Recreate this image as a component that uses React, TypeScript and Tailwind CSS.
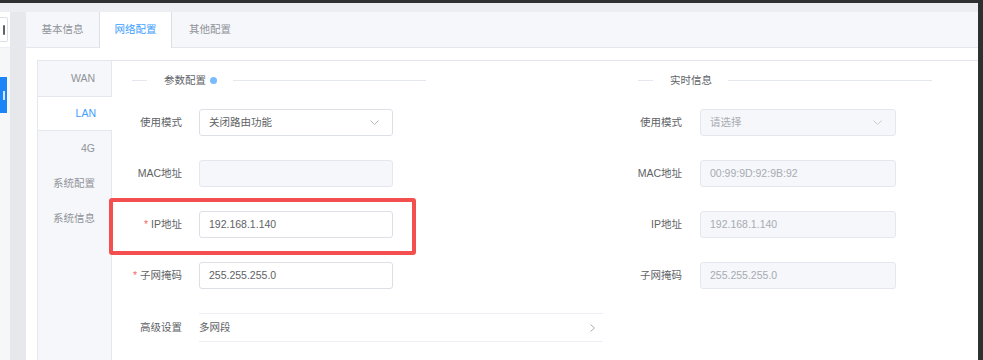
import { ReactNode } from 'react'

const font = 'font-["Liberation_Sans","Noto_Sans_CJK_SC",sans-serif]'

function ChevronDown({ color }: { color: string }) {
  return (
    <svg width="9" height="5" viewBox="0 0 9 5" fill="none" stroke={color} strokeWidth="1">
      <polyline points="0.5,0.5 4.5,4.5 8.5,0.5" />
    </svg>
  )
}

function Divider({ title, dot }: { title: string; dot?: boolean }) {
  return (
    <div className="flex items-center w-[294px] h-[12px]">
      <div className="w-[15px] h-px bg-[#e4e7ed]" />
      <span className="ml-[17px] leading-none text-[#606266]">{title}</span>
      {dot && <span className="ml-[4px] w-[7px] h-[7px] rounded-full bg-[#79bbff]" />}
      <div className="ml-[16px] flex-1 h-px bg-[#e4e7ed]" />
    </div>
  )
}

function Row({ label, required, w, gap, children }: { label: string; required?: boolean; w: string; gap: string; children: ReactNode }) {
  return (
    <div className="flex items-center h-[27px]">
      <div className={`${w} flex justify-end whitespace-nowrap text-[#606266] shrink-0`}>
        {required && <span className="text-[#f56c6c] mr-[3px]">*</span>}
        <span>{label}</span>
      </div>
      <div className={gap}>{children}</div>
    </div>
  )
}

function Input({ value, disabled, select, w }: { value: string; disabled?: boolean; select?: boolean; w: string }) {
  return (
    <div
      className={`${w} h-[27px] rounded-[3px] border flex items-center justify-between pl-[9px] pr-[13px] ${
        disabled ? 'bg-[#f5f7fa] border-[#e4e7ed] text-[#a8abb2]' : 'bg-white border-[#dcdfe6] text-[#606266]'
      }`}
    >
      <span className="leading-none">{value}</span>
      {select && <ChevronDown color={disabled ? '#c8cbd1' : '#b4b7bd'} />}
    </div>
  )
}

export default function App() {
  const tabs = ['基本信息', '网络配置', '其他配置']
  const side = ['WAN', 'LAN', '4G', '系统配置', '系统信息']

  return (
    <div className={`relative w-[983px] h-[360px] overflow-hidden bg-[#2f3130] text-[10.5px] ${font}`}>
      <div className="h-[3px]" />
      <div className="flex w-[978px] h-[357px] bg-[#eceef1] pt-[9px]">
        {/* left sidebar sliver */}
        <div className="w-[11px] h-full flex flex-col bg-[#f6f7f9] border-r border-[#e4e7ed] rounded-tr-[3px]">
          <div className="h-[36px] bg-white border-b border-[#ebeef5] pt-[5px]">
            <div className="w-[8px] h-[25px] border border-l-0 border-[#dcdfe6] rounded-r-[2px] flex items-center justify-end pr-[2px]">
              <div className="w-[2px] h-[10px] bg-[#606266] rounded-[1px]" />
            </div>
          </div>
          <div className="mt-[29px] w-[7px] h-[36px] bg-[#1c84f6] flex items-center justify-end pr-[2px]">
            <div className="w-[2px] h-[9px] bg-white/80" />
          </div>
        </div>
        <div className="w-[14px] h-full bg-[#e7e8eb]" />

        {/* main card */}
        <div className="flex-1 h-full flex flex-col bg-white rounded-tl-[3px] border-l border-[#e4e7ed] overflow-hidden">
          <div className="h-[36px] shrink-0 flex bg-[#f5f7fa] border-b border-[#e4e7ed]">
            {tabs.map((t, i) =>
              i === 1 ? (
                <div key={t} className="w-[73px] h-[36px] bg-white border-x border-[#dcdfe6] flex items-center justify-center text-[#409eff]">
                  {t}
                </div>
              ) : (
                <div key={t} className={`${i === 0 ? 'w-[73px]' : 'w-[76px]'} h-full flex items-center justify-center text-[#909399]`}>
                  {t}
                </div>
              )
            )}
          </div>

          <div className="flex-1 pt-[12px] pl-[11px]">
            <div className="h-full flex border-t border-l border-[#e4e7ed]">
              {/* vertical tabs */}
              <div className="w-[74px] shrink-0 bg-[#f5f7fa] border-r border-[#e4e7ed] flex flex-col">
                {side.map(s =>
                  s === 'LAN' ? (
                    <div key={s} className="h-[35px] -mr-px bg-white border-y border-[#e4e7ed] flex items-center justify-end pr-[16px] text-[#409eff]">
                      {s}
                    </div>
                  ) : (
                    <div key={s} className="h-[35px] flex items-center justify-end pr-[16px] text-[#909399]">
                      {s}
                    </div>
                  )
                )}
              </div>

              {/* content */}
              <div className="flex-1 flex pt-[13px] pl-[20px]">
                <div className="w-[506px] shrink-0">
                  <Divider title="参数配置" dot />
                  <div className="mt-[23px] flex flex-col gap-[24px]">
                    <Row label="使用模式" w="w-[50px]" gap="ml-[17px]">
                      <Input w="w-[194px]" value="关闭路由功能" select />
                    </Row>
                    <Row label="MAC地址" w="w-[50px]" gap="ml-[17px]">
                      <Input w="w-[194px]" value="" disabled />
                    </Row>
                    <Row label="IP地址" required w="w-[50px]" gap="ml-[17px]">
                      <Input w="w-[194px]" value="192.168.1.140" />
                    </Row>
                    <Row label="子网掩码" required w="w-[50px]" gap="ml-[17px]">
                      <Input w="w-[194px]" value="255.255.255.0" />
                    </Row>
                    <div className="flex items-center h-[29px]">
                      <div className="w-[50px] text-right text-[#606266] whitespace-nowrap">高级设置</div>
                      <div className="ml-[17px] w-[404px] h-[29px] border-y border-[#ebeef5] flex items-center justify-between pr-[8px] text-[#606266]">
                        <span className="leading-none">多网段</span>
                        <svg width="5" height="8" viewBox="0 0 5 8" fill="none" stroke="#a8abb2" strokeWidth="1">
                          <polyline points="0.5,0.5 4.5,4 0.5,7.5" />
                        </svg>
                      </div>
                    </div>
                  </div>
                </div>

                <div className="w-[294px] shrink-0">
                  <Divider title="实时信息" />
                  <div className="mt-[23px] flex flex-col gap-[24px]">
                    <Row label="使用模式" w="w-[44px]" gap="ml-[18px]">
                      <Input w="w-[196px]" value="请选择" disabled select />
                    </Row>
                    <Row label="MAC地址" w="w-[44px]" gap="ml-[18px]">
                      <Input w="w-[196px]" value="00:99:9D:92:9B:92" disabled />
                    </Row>
                    <Row label="IP地址" w="w-[44px]" gap="ml-[18px]">
                      <Input w="w-[196px]" value="192.168.1.140" disabled />
                    </Row>
                    <Row label="子网掩码" w="w-[44px]" gap="ml-[18px]">
                      <Input w="w-[196px]" value="255.255.255.0" disabled />
                    </Row>
                  </div>
                </div>
              </div>
            </div>
          </div>
        </div>
      </div>

      {/* red annotation box */}
      <div className="absolute left-[109px] top-[198px] w-[307px] h-[57px] border-[4px] border-[#f44f4f] rounded-[3px]" />
    </div>
  )
}
